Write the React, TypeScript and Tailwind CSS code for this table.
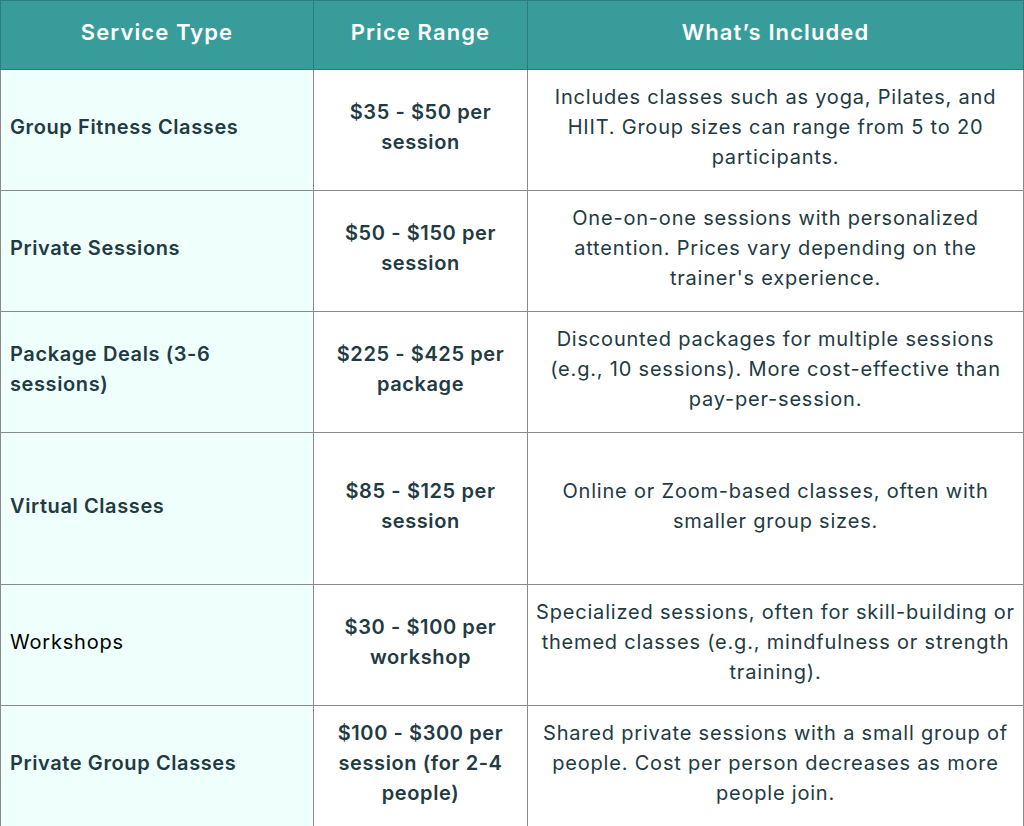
const rows = [
  {
    service: "Group Fitness Classes",
    price: "$35 - $50 per session",
    included: "Includes classes such as yoga, Pilates, and HIIT. Group sizes can range from 5 to 20 participants.",
    h: "h-[121px]",
    bold: true,
  },
  {
    service: "Private Sessions",
    price: "$50 - $150 per session",
    included: "One-on-one sessions with personalized attention. Prices vary depending on the trainer's experience.",
    h: "h-[121px]",
    bold: true,
  },
  {
    service: "Package Deals (3-6 sessions)",
    price: "$225 - $425 per package",
    included: "Discounted packages for multiple sessions (e.g., 10 sessions). More cost-effective than pay-per-session.",
    h: "h-[121px]",
    bold: true,
  },
  {
    service: "Virtual Classes",
    price: "$85 - $125 per session",
    included: "Online or Zoom-based classes, often with smaller group sizes.",
    h: "h-[152px]",
    bold: true,
  },
  {
    service: "Workshops",
    price: "$30 - $100 per workshop",
    included: "Specialized sessions, often for skill-building or themed classes (e.g., mindfulness or strength training).",
    h: "h-[121px]",
    bold: false,
  },
  {
    service: "Private Group Classes",
    price: "$100 - $300 per session (for 2-4 people)",
    included: "Shared private sessions with a small group of people. Cost per person decreases as more people join.",
    h: "h-[121px]",
    bold: true,
  },
];

export default function App() {
  return (
    <div className="w-[1024px] h-[826px] bg-white font-['Inter',sans-serif] text-[20px] leading-[30px] tracking-[0.04em] text-[#223a42]">
      <table className="w-full table-fixed border-collapse">
        <colgroup>
          <col className="w-[313px]" />
          <col className="w-[214px]" />
          <col />
        </colgroup>
        <thead>
          <tr className="h-[69px] bg-[#389c9b] text-white text-[22px] font-semibold tracking-[0.05em]">
            <th className="border border-[#2b7d7c] pb-[7px] font-semibold">Service Type</th>
            <th className="border border-[#2b7d7c] pb-[7px] font-semibold">Price Range</th>
            <th className="border border-[#2b7d7c] pb-[7px] font-semibold">What’s Included</th>
          </tr>
        </thead>
        <tbody>
          {rows.map((r) => (
            <tr key={r.service} className={r.h}>
              <td
                className={`border border-[#8a8a8a] bg-[#effffc] pl-[9px] pr-3 pb-[6px] text-left ${
                  r.bold ? "font-semibold text-[#223a42] tracking-[0.03em]" : "font-normal text-black"
                }`}
              >
                {r.service}
              </td>
              <td className="border border-[#8a8a8a] px-5 pb-[6px] text-center font-semibold tracking-[0.03em]">
                {r.price}
              </td>
              <td className="border border-[#8a8a8a] px-1 pb-[6px] text-center">{r.included}</td>
            </tr>
          ))}
        </tbody>
      </table>
    </div>
  );
}
